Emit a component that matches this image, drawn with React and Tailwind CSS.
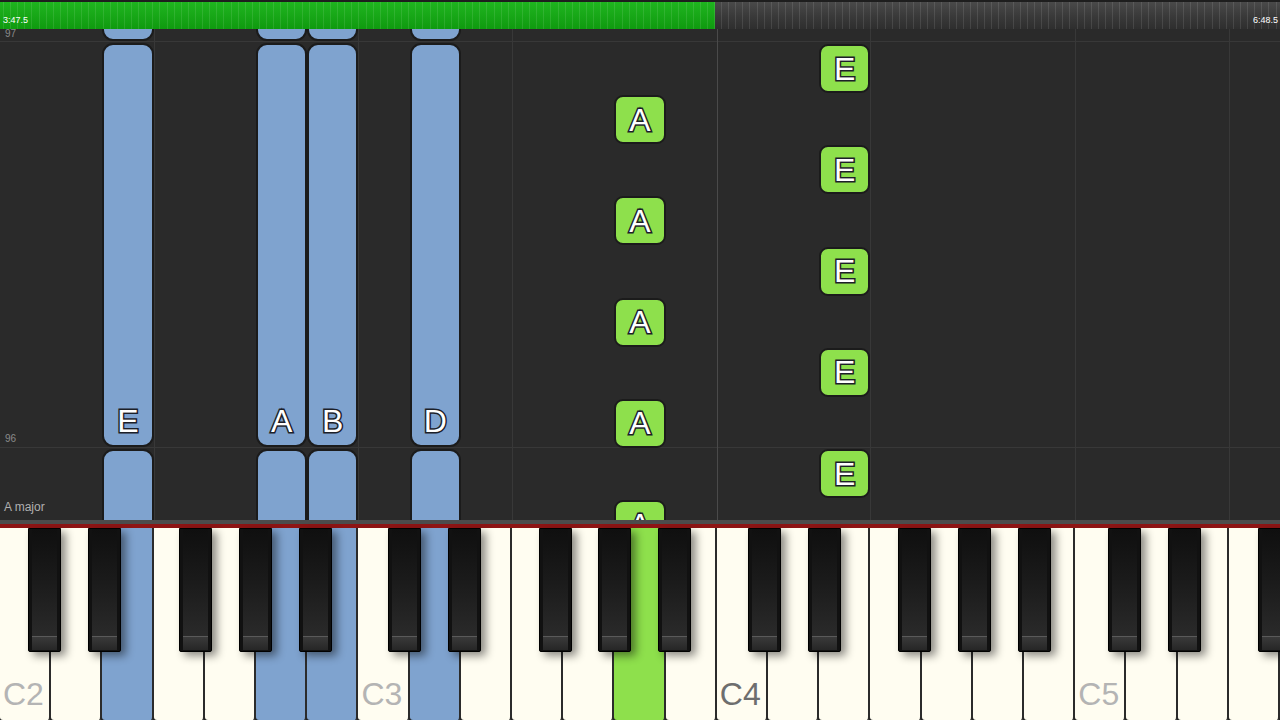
import React from 'react';

const whiteNames = ['C', 'D', 'E', 'F', 'G', 'A', 'B'];
const whiteKeys = Array.from({ length: 25 }, (_, i) => ({
    name: whiteNames[i % 7],
    octave: 2 + Math.floor(i / 7),
}));

// highlighted keys on the keyboard
const keyColor = {
    2: 'bg-[#7fa3cf]',
    5: 'bg-[#7fa3cf]',
    6: 'bg-[#7fa3cf]',
    8: 'bg-[#7fa3cf]',
    12: 'bg-[#8ee04c]',
};

const labels = {
    0: { text: 'C2', cls: 'text-[#b4b4b4]' },
    7: { text: 'C3', cls: 'text-[#b4b4b4]' },
    14: { text: 'C4', cls: 'text-[#6e6e6e]' },
    21: { text: 'C5', cls: 'text-[#b4b4b4]' },
};

const blackKeys = [28, 88, 179, 239, 299, 388, 448, 539, 598, 658, 748, 808, 898, 958, 1018, 1108, 1168, 1258];

// columns that start a C or F get a grid line
const lineCols = [3, 7, 10, 14, 17, 21, 24];

const blueCols = { 2: 'E', 5: 'A', 6: 'B', 8: 'D' };
const greenCols = { 12: 'A', 16: 'E' };

const outline = "text-white [-webkit-text-stroke:3px_#1c2028] [paint-order:stroke_fill]";

function Ticks() {
    return (
        <div className='absolute inset-0 flex justify-between px-[3px]'>
            {Array.from({ length: 180 }, (_, i) => (
                <div key={i} className='w-px h-full bg-white/10'></div>
            ))}
        </div>
    );
}

function TopBar() {
    return (
        <div className='relative z-10 h-[29px] flex shrink-0 border-t-2 border-[#1e1e1e]'>
            <div className='w-[715px] h-full bg-gradient-to-b from-[#1fb51f] to-[#0f9a0f]'></div>
            <div className='flex-1 h-full bg-gradient-to-b from-[#4a4a4a] via-[#3a3a3a] to-[#2e2e2e]'></div>
            <Ticks />
            <div className='absolute inset-x-0 top-[14px] flex justify-between pl-[3px] text-[9px] leading-none text-white whitespace-nowrap'>
                <span>3:47.5</span>
                <span className='w-[27px] overflow-hidden'>6:48.5</span>
            </div>
        </div>
    );
}

function BlueColumn({ label }) {
    return (
        <div className='flex flex-col gap-[2px] mt-[-40px]'>
            <div className='h-[52px] rounded-[11px] border-2 border-[#1b1b1b] bg-[#7fa3cf]'></div>
            <div className='h-[404px] rounded-[11px] border-2 border-[#1b1b1b] bg-[#7fa3cf] flex items-end justify-center pb-[8px]'>
                <span className={`text-[32px] leading-none ${outline}`}>{label}</span>
            </div>
            <div className='h-[120px] rounded-[11px] border-2 border-[#1b1b1b] bg-[#7fa3cf]'></div>
        </div>
    );
}

function GreenColumn({ label }) {
    const pad = label === 'A' ? 'pt-[66px]' : 'pt-[15px]';
    return (
        <div className={`flex flex-col gap-[52.3px] ${pad}`}>
            {[0, 1, 2, 3, 4].map((i) => (
                <div
                    key={i}
                    className={`h-[49px] shrink-0 rounded-[9px] border-2 border-[#1b1b1b] bg-[#8ee04c] flex items-center justify-center text-[32px] leading-none ${outline}`}
                >
                    {label}
                </div>
            ))}
        </div>
    );
}

function Roll() {
    return (
        <div className='relative flex-1 overflow-hidden bg-[#2a2a2a]'>
            {/* bar lines */}
            <div className='absolute inset-x-0 top-[12px] h-px bg-[#383838]'></div>
            <div className='absolute inset-x-0 top-[418px] h-px bg-[#383838]'></div>

            <div className='relative h-full grid grid-cols-[repeat(25,minmax(0,1fr))]'>
                {Array.from({ length: 25 }, (_, i) => (
                    <div
                        key={i}
                        className={`h-full ${lineCols.includes(i) ? (i === 14 ? 'shadow-[inset_1px_0_0_#4a4a4a]' : 'shadow-[inset_1px_0_0_#383838]') : ''}`}
                    >
                        {blueCols[i] && <BlueColumn label={blueCols[i]} />}
                        {greenCols[i] && <GreenColumn label={greenCols[i]} />}
                    </div>
                ))}
            </div>

            {/* labels over the roll */}
            <div className='absolute inset-y-0 left-[4px] flex flex-col text-[#8a8a8a]'>
                <span className='text-[10px] leading-none ml-px'>97</span>
                <span className='text-[10px] leading-none ml-px mt-[395px]'>96</span>
                <span className='text-[12px] leading-none text-[#b0b0b0] mt-[57px]'>A major</span>
            </div>
        </div>
    );
}

function Keyboard() {
    return (
        <div className='h-[200px] shrink-0 flex flex-col'>
            <div className='h-[4px] bg-[#4c4c4c]'></div>
            <div className='h-[4px] bg-[#8e1414]'></div>
            <div className='relative flex-1 flex bg-[#222]'>
                {whiteKeys.map((k, i) => (
                    <div
                        key={i}
                        className={`flex-1 h-full flex items-end pl-[3px] pb-[10px] border-r-2 border-[#2b2b2b] rounded-b-[3px] ${keyColor[i] || 'bg-[#fffdf1]'}`}
                    >
                        {labels[i] && (
                            <span className={`text-[32px] leading-none ${labels[i].cls}`}>
                                {labels[i].text}
                            </span>
                        )}
                    </div>
                ))}

                {blackKeys.map((x) => (
                    <div
                        key={x}
                        className='absolute top-0 w-[33px] h-[124px] rounded-b-[2px] bg-[#111] border border-[#000] flex flex-col shadow-[5px_4px_8px_rgba(0,0,0,0.45)]'
                        style={{ left: x }}
                    >
                        <div className='flex-1 mx-[3px] bg-gradient-to-b from-[#0f0f0f] via-[#1b1b1b] to-[#2a2a2a]'></div>
                        <div className='h-[14px] mx-[3px] mb-[1px] border-t border-[#5a5a5a] bg-gradient-to-b from-[#3a3a3a] to-[#262626]'></div>
                    </div>
                ))}
            </div>
        </div>
    );
}

function App() {
    return (
        <div className="w-[1280px] h-[720px] overflow-hidden flex flex-col bg-[#2a2a2a] font-['Liberation_Sans',Arial,sans-serif]">
            <TopBar />
            <Roll />
            <Keyboard />
        </div>
    );
}

export default App;
